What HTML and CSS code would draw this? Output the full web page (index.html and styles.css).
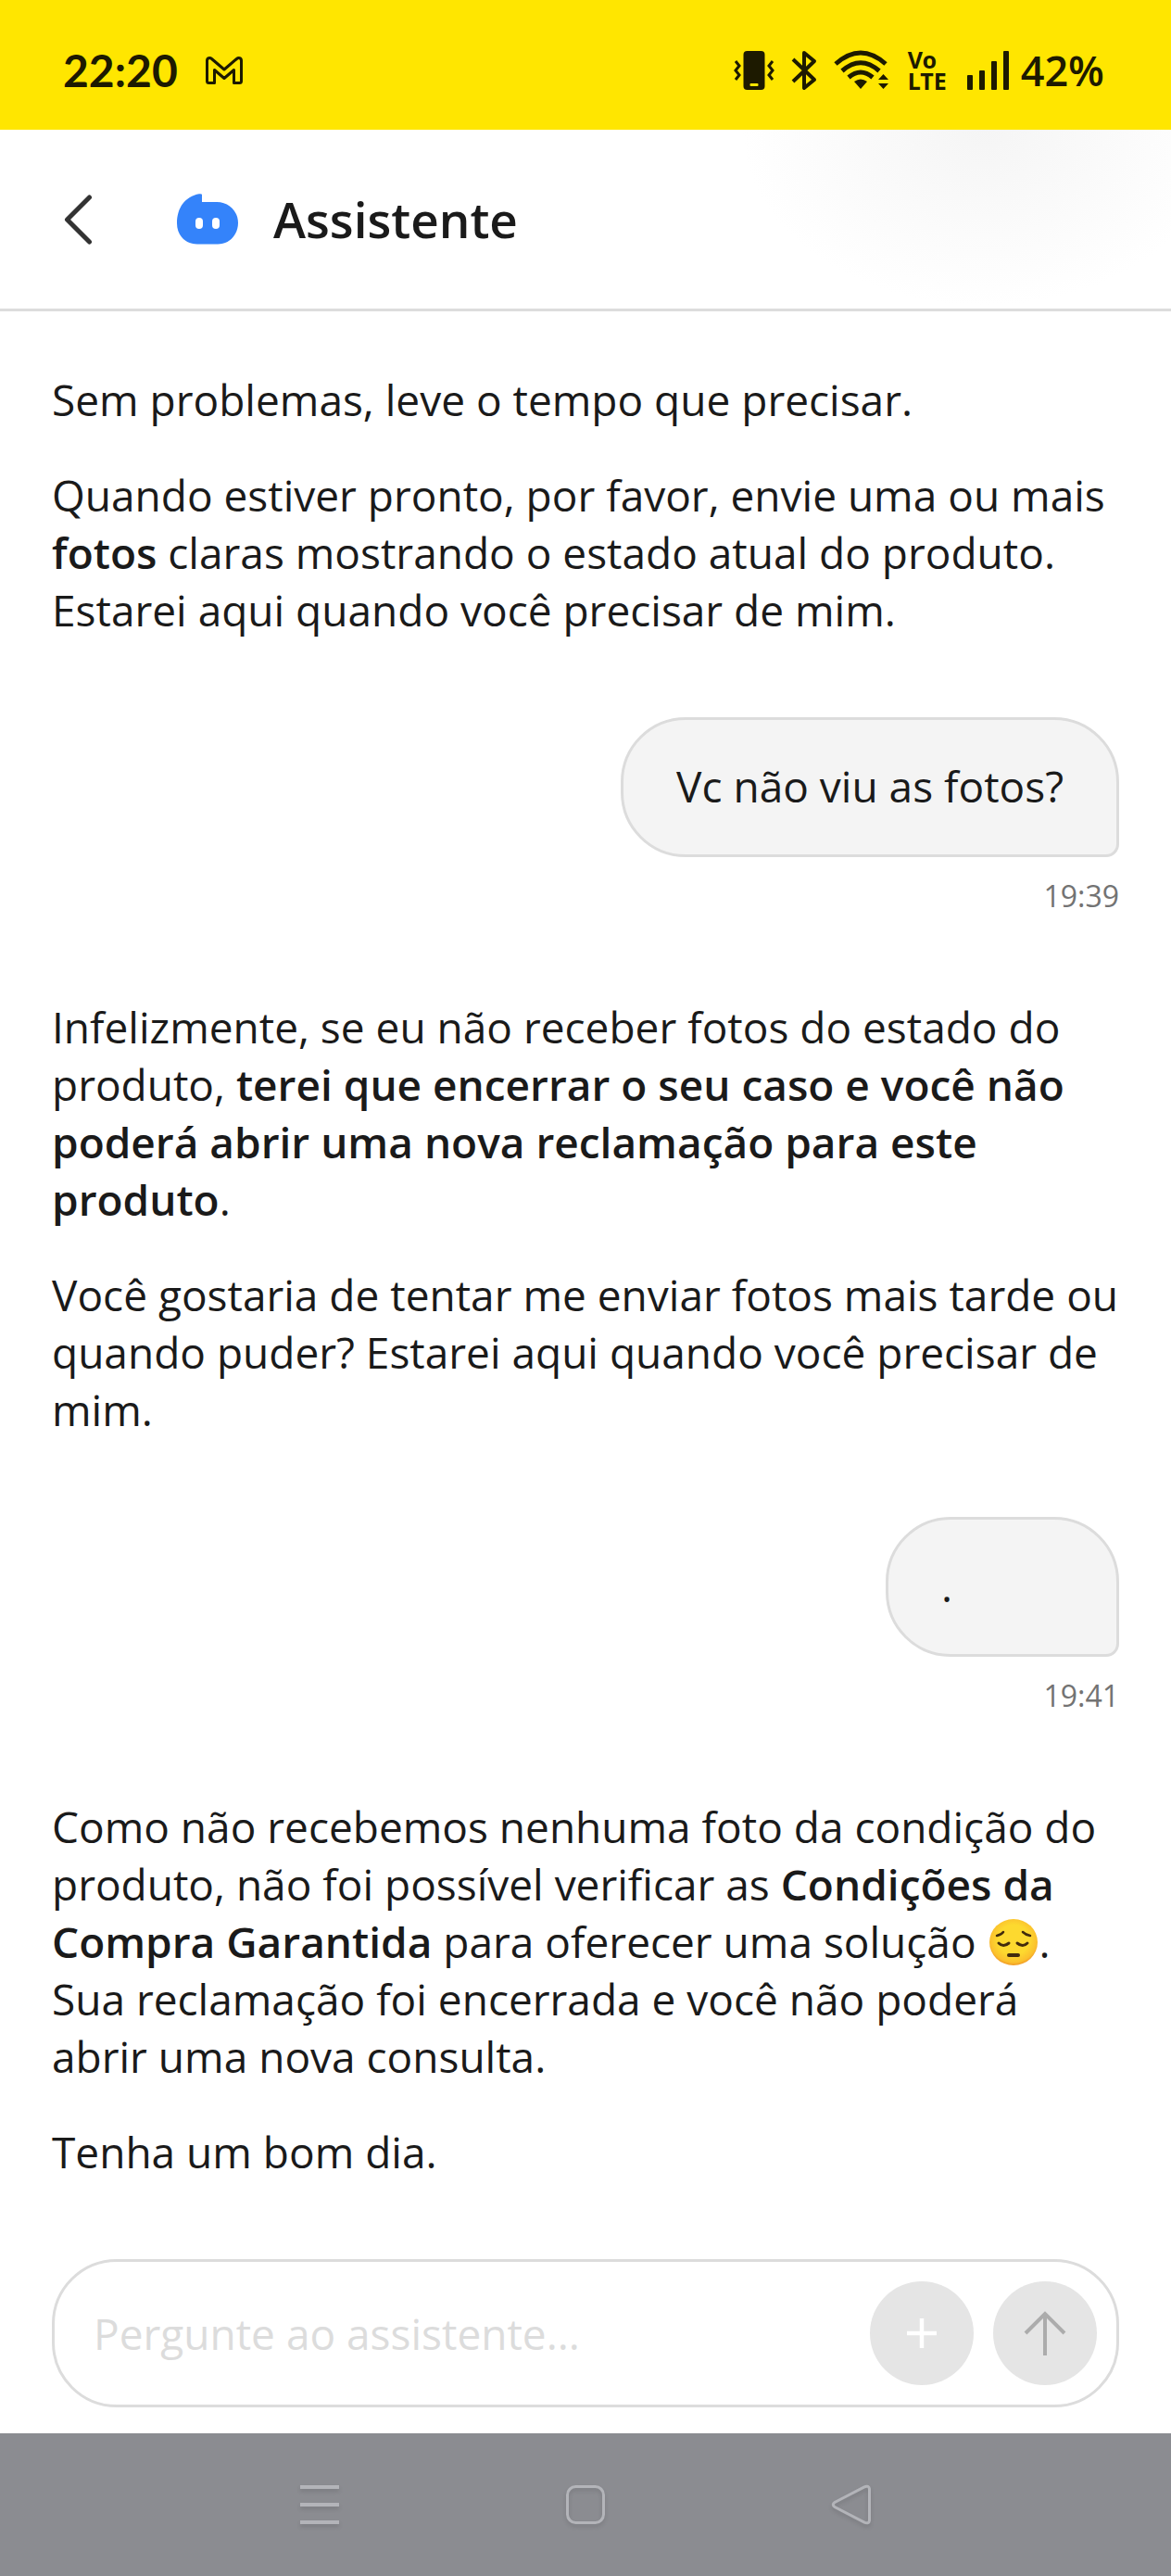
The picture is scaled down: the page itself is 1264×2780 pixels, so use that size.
FILE: index.html
```html
<!DOCTYPE html>
<html lang="pt-BR">
<head>
  <meta charset="UTF-8">
  <meta name="viewport" content="width=device-width, initial-scale=1.0">
  <title>Assistente</title>
  <link rel="stylesheet" href="styles.css">
</head>
<body>
  <div class="status-bar">
    <span class="clock">22:20</span>
    <svg class="gmail" width="40" height="30" viewBox="0 0 40 30" fill="none" stroke="#1d1a00" stroke-width="3" stroke-linejoin="round">
      <path d="M1.500 4.500C1.500 1.500 4.500 0.800 6.500 2.500L20 14L33.500 2.500C35.500 0.800 38.500 1.500 38.500 4.500V26.500Q38.500 28.500 36.500 28.500H30.500V14.500L20 23.500L9.500 14.500V28.500H3.500Q1.500 28.500 1.500 26.500Z"/>
    </svg>
    <div class="status-icons">
      <!-- vibrate -->
      <svg width="44" height="44" viewBox="0 0 44 44">
        <rect x="10.500" y="1" width="23" height="42" rx="4" fill="#1d1a00"/>
        <rect x="17.500" y="36" width="9" height="3" rx="1" fill="#ffe600"/>
        <path d="M2 12l4 5-4 5 4 5-4 5M42 12l-4 5 4 5-4 5 4 5" fill="none" stroke="#1d1a00" stroke-width="3"/>
      </svg>
      <!-- bluetooth -->
      <svg class="bluetooth" width="28" height="44" viewBox="0 0 28 44" fill="none" stroke="#1d1a00" stroke-width="4" stroke-linejoin="round">
        <path d="M2 10L25 32L14 41V3L25 12L2 34"/>
      </svg>
      <!-- wifi -->
      <svg class="wifi" width="60" height="44" viewBox="0 0 60 44">
        <g fill="none" stroke="#1d1a00" stroke-width="5">
          <path d="M2 15Q29 -9 56 15"/>
          <path d="M9 22.500Q29 5 49 22.500"/>
          <path d="M16 29.500Q29 18.500 42 29.500"/>
        </g>
        <path d="M22 34Q29 29 36 34L29 42Z" fill="#1d1a00"/>
        <path d="M48 32l5.500-6 5.500 6zM48 36h11l-5.500 6z" fill="#1d1a00"/>
      </svg>
      <span class="volte">Vo<br>LTE</span>
      <!-- signal -->
      <svg class="signal" width="46" height="44" viewBox="0 0 46 44" fill="#1d1a00">
        <rect x="0" y="27" width="6" height="16" rx="1"/>
        <rect x="13" y="22" width="6" height="21" rx="1"/>
        <rect x="26" y="12" width="6" height="31" rx="1"/>
        <rect x="39" y="1" width="6" height="42" rx="1"/>
      </svg>
      <span class="battery">42%</span>
    </div>
  </div>

  <header class="header">
    <button class="back" type="button" aria-label="Voltar">
      <svg width="32" height="54" viewBox="0 0 32 54" fill="none" stroke="#333" stroke-width="5" stroke-linecap="round" stroke-linejoin="round">
        <path d="M28.500 3L4.500 27L28.500 51"/>
      </svg>
    </button>
    <svg class="bot" width="66" height="55" viewBox="0 0 66 55">
      <path d="M27 1V9H43C56 9 66 19 66 31.500S57 54.500 44 54.500H22C9 54.500 0 45 0 32C0 15 9 3 24 0.300Q27 0 27 1Z" fill="#3483fa"/>
      <rect x="20" y="26" width="8" height="12" rx="4" fill="#fff"/>
      <rect x="38" y="26" width="8" height="12" rx="4" fill="#fff"/>
    </svg>
    <h1>Assistente</h1>
  </header>

  <main class="chat">
    <div class="message">
      <p>Sem problemas, leve o tempo que precisar.</p>
      <p>Quando estiver pronto, por favor, envie uma ou mais <strong>fotos</strong> claras mostrando o estado atual do produto. Estarei aqui quando você precisar de mim.</p>
    </div>

    <div class="reply">
      <div class="bubble">Vc não viu as fotos?</div>
      <time>19:39</time>
    </div>

    <div class="message">
      <p>Infelizmente, se eu não receber fotos do estado do produto, <strong>terei que encerrar o seu caso e você não poderá abrir uma nova reclamação para este produto</strong>.</p>
      <p>Você gostaria de tentar me enviar fotos mais tarde ou quando puder? Estarei aqui quando você precisar de mim.</p>
    </div>

    <div class="reply">
      <div class="bubble">.</div>
      <time>19:41</time>
    </div>

    <div class="message">
      <p>Como não recebemos nenhuma foto da condição do produto, não foi possível verificar as <strong>Condições da Compra Garantida</strong> para oferecer uma solução
        <svg class="emoji" role="img" aria-label="😔" width="56" height="52" viewBox="0 0 56 52">
          <defs>
            <radialGradient id="face" cx="50%" cy="45%" r="54%">
              <stop offset="60%" stop-color="#fdd92f"/>
              <stop offset="90%" stop-color="#fbc02d"/>
              <stop offset="100%" stop-color="#f29f26"/>
            </radialGradient>
          </defs>
          <ellipse cx="28" cy="26" rx="26" ry="25" fill="url(#face)"/>
          <g fill="none" stroke="#422b0d" stroke-width="2.500" stroke-linecap="round">
            <path d="M10 19Q15 18 17 15M38 15Q41 18 46 19"/>
            <path d="M12 27Q17 32 23 27M32 27Q38 32 43 27" stroke-width="3"/>
            <path d="M23 40H33" stroke-width="4"/>
          </g>
        </svg>.<br>Sua reclamação foi encerrada e você não poderá abrir uma nova consulta.</p>
      <p>Tenha um bom dia.</p>
    </div>
  </main>

  <form class="composer">
    <input type="text" placeholder="Pergunte ao assistente..." aria-label="Pergunte ao assistente">
    <button type="button" aria-label="Adicionar">
      <svg width="34" height="34" viewBox="0 0 34 34" stroke="#fff" stroke-width="4.500">
        <path d="M17 1V33M1 17H33"/>
      </svg>
    </button>
    <button type="submit" aria-label="Enviar">
      <svg width="46" height="48" viewBox="0 0 46 48" fill="none" stroke="#acacac" stroke-width="4">
        <path d="M23 48V3M2 24L23 3L44 24"/>
      </svg>
    </button>
  </form>

  <nav class="nav-bar">
    <button type="button" aria-label="Recentes">
      <svg width="44" height="44" viewBox="0 0 44 44" fill="none" stroke="#b3b4b9" stroke-width="4">
        <path d="M1 3H43M1 22H43M1 41H43"/>
      </svg>
    </button>
    <button type="button" aria-label="Início">
      <svg width="44" height="44" viewBox="0 0 44 44" fill="none" stroke="#b3b4b9" stroke-width="3">
        <rect x="2.500" y="2.500" width="39" height="39" rx="9"/>
      </svg>
    </button>
    <button type="button" aria-label="Voltar">
      <svg width="44" height="44" viewBox="0 0 44 44" fill="none" stroke="#b3b4b9" stroke-width="3">
        <path d="M4 19.500L36 2.800Q41 0.800 41.500 5V39Q41 43.200 36 41.200L4 24.500Q0.500 22 4 19.500Z"/>
      </svg>
    </button>
  </nav>
</body>
</html>
```

FILE: styles.css
```css
* {
  box-sizing: border-box;
}
body {
  margin: 0;
  min-height: 100vh;
  display: flex;
  flex-direction: column;
  background-color: #fff;
  color: #1a1a1a;
  font-family: "Open Sans", "Liberation Sans", sans-serif;
  font-size: 46px;
  line-height: 62px;
}
button {
  padding: 0;
  border: none;
  background: none;
  cursor: pointer;
}
svg {
  display: block;
  flex: none;
}

/* status bar */
.status-bar {
  display: flex;
  align-items: center;
  height: 140px;
  padding: 12px 72px 0 68px;
  background-color: #ffe600;
  color: #1d1a00;
}
.clock {
  font-family: Lato, sans-serif;
  font-size: 48px;
  font-weight: 700;
}
.gmail {
  margin-left: 30px;
}
.status-icons {
  display: flex;
  align-items: center;
  margin-left: auto;
}
.bluetooth {
  margin-left: 18px;
}
.wifi {
  margin-left: 18px;
}
.volte {
  margin-left: 20px;
  font-family: "Noto Sans", sans-serif;
  font-size: 25px;
  font-weight: 700;
  line-height: 23px;
}
.signal {
  margin-left: 22px;
}
.battery {
  margin-left: 12px;
  font-size: 45px;
  font-weight: 600;
}

/* header */
.header {
  display: flex;
  align-items: center;
  height: 196px;
  padding-left: 68px;
  border-bottom: 3px solid #dcdcdc;
  background: radial-gradient(ellipse 260px 190px at 84% 0, #f5f5f5, #fff);
}
.bot {
  margin-left: 91px;
}
h1 {
  margin: 0 0 0 38px;
  font-size: 53px;
  font-weight: 600;
}

/* conversation */
.chat {
  padding: 64px 56px 85px;
}
.message p {
  margin: 0 0 41px;
}
.message p:last-child {
  margin-bottom: 0;
}
.message strong {
  font-weight: 600;
}
.emoji {
  display: inline-block;
  vertical-align: -9px;
}
.reply {
  display: flex;
  flex-direction: column;
  align-items: flex-end;
  padding: 85px 0 90px;
}
.bubble {
  min-width: 252px;
  padding: 40px 57px 43px;
  border: 3px solid #dcdcdc;
  border-radius: 70px 70px 14px 70px;
  background-color: #f4f4f4;
}
.reply time {
  margin-top: 22px;
  color: #737373;
  font-size: 32px;
  line-height: 40px;
}

/* message box */
.composer {
  display: flex;
  align-items: center;
  gap: 21px;
  height: 160px;
  margin: 0 56px 28px;
  padding: 0 21px 0 42px;
  border: 3px solid #dcdcdc;
  border-radius: 70px;
}
.composer input {
  flex: 1;
  min-width: 0;
  padding: 0;
  border: none;
  outline: none;
  background: none;
  color: inherit;
  font: inherit;
}
.composer input::placeholder {
  color: #dcdcdc;
}
.composer button {
  display: flex;
  align-items: center;
  justify-content: center;
  width: 112px;
  height: 112px;
  border-radius: 50%;
  background-color: #e5e5e5;
}

/* system navigation */
.nav-bar {
  display: flex;
  align-items: center;
  justify-content: center;
  gap: 243px;
  height: 154px;
  margin-top: auto;
  background-color: #8b8c91;
}
.nav-bar svg {
  filter: drop-shadow(0 3px 2px rgba(0, 0, 0, 0.12));
}
```
